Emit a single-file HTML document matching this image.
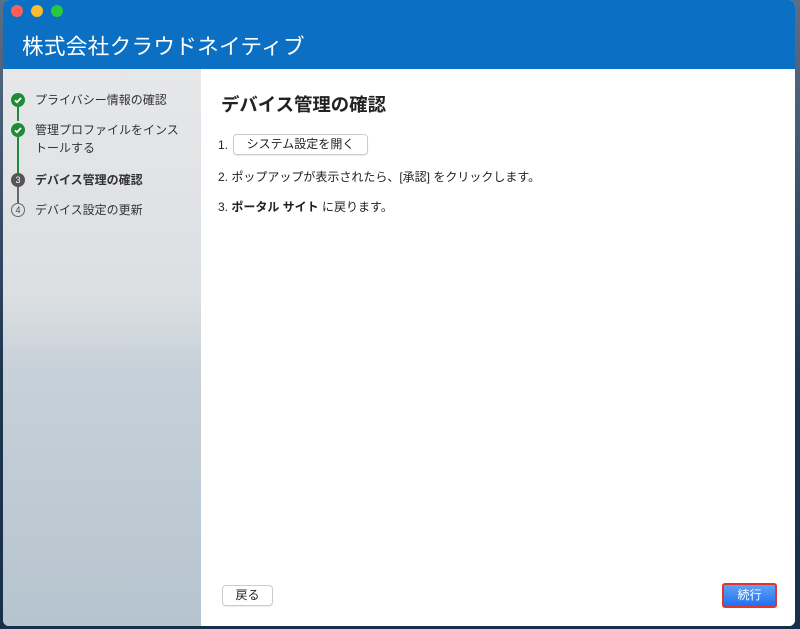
<!DOCTYPE html>
<html><head><meta charset="utf-8">
<style>
*{margin:0;padding:0;box-sizing:border-box}
body{width:800px;height:629px;overflow:hidden;background:linear-gradient(#5a6f86,#1e3550 60%,#17304a);font-family:"Liberation Sans","Noto Sans CJK JP",sans-serif;position:relative}
.win{position:absolute;left:3px;top:0;width:792px;height:626px;border-radius:6px;overflow:hidden;background:#fff}
.hdr{position:absolute;left:0;top:0;width:100%;height:69px;background:#0b70c3}
.dot{position:absolute;top:5px;width:12px;height:12px;border-radius:50%}
.title{position:absolute;left:19px;top:30px;color:#fff;font-size:21.6px;letter-spacing:0.3px}
.side{position:absolute;left:0;top:69px;width:198px;height:557px;background:linear-gradient(#e6e7e9 0%,#dcdfe2 40%,#c6d0d8 55%,#b6c4cf 100%)}
.step{position:absolute;left:32px;font-size:12px;color:#333;line-height:18px}
.ic{position:absolute;left:8px;width:14px;height:14px;border-radius:50%}
.line{position:absolute;left:14px;width:1.5px}
.main{position:absolute;left:198px;top:69px;right:0;bottom:0;background:#fff}
h1{position:absolute;left:20px;top:22px;font-size:18.4px;font-weight:bold;color:#222}
.t{position:absolute;left:17px;font-size:12px;color:#222}
.btn{position:absolute;background:#fff;border:1px solid #ccc;border-radius:4px;font-size:12px;color:#222;text-align:center;box-shadow:0 1px 1px rgba(0,0,0,.08)}
</style></head><body>
<div class="win">
 <div class="hdr">
  <div class="dot" style="left:8px;background:#fe5f57"></div>
  <div class="dot" style="left:28px;background:#febc2e"></div>
  <div class="dot" style="left:48px;background:#28c840"></div>
  <div class="title">株式会社クラウドネイティブ</div>
 </div>
 <div class="side">
  <div class="ic" style="top:24px;background:#1f8a3a"><svg width="14" height="14"><path d="M4 7.2l2 2 4-4.2" stroke="#fff" stroke-width="1.8" fill="none"/></svg></div>
  <div class="line" style="top:38px;height:14px;background:#1f8a3a"></div>
  <div class="ic" style="top:54px;background:#1f8a3a"><svg width="14" height="14"><path d="M4 7.2l2 2 4-4.2" stroke="#fff" stroke-width="1.8" fill="none"/></svg></div>
  <div class="line" style="top:68px;height:36px;background:#1f8a3a"></div>
  <div class="ic" style="top:104px;background:#555;color:#fff;font-size:9px;text-align:center;line-height:14px">3</div>
  <div class="line" style="top:118px;height:16px;background:#666"></div>
  <div class="ic" style="top:134px;border:1px solid #666;color:#444;font-size:9px;text-align:center;line-height:12px">4</div>
  <div class="step" style="top:22px">プライバシー情報の確認</div>
  <div class="step" style="top:52px">管理プロファイルをインス<br>トールする</div>
  <div class="step" style="top:102px;font-weight:bold">デバイス管理の確認</div>
  <div class="step" style="top:132px">デバイス設定の更新</div>
 </div>
 <div class="main">
  <h1>デバイス管理の確認</h1>
  <div class="t" style="top:69px">1.</div>
  <div class="btn" style="left:32px;top:65px;width:135px;height:21px;line-height:19px">システム設定を開く</div>
  <div class="t" style="top:99px">2. ポップアップが表示されたら、[承認] をクリックします。</div>
  <div class="t" style="top:129px">3. <b>ポータル サイト</b> に戻ります。</div>
  <div class="btn" style="left:21px;top:516px;width:51px;height:21px;line-height:19px">戻る</div>
  <div style="position:absolute;left:521px;top:514px;width:55px;height:25px;border:2px solid #e0362b;border-radius:3px;background:linear-gradient(#5fa3f7,#1f6ff0);color:#fff;font-size:12px;text-align:center;line-height:21px">続行</div>
 </div>
</div>
</body></html>
